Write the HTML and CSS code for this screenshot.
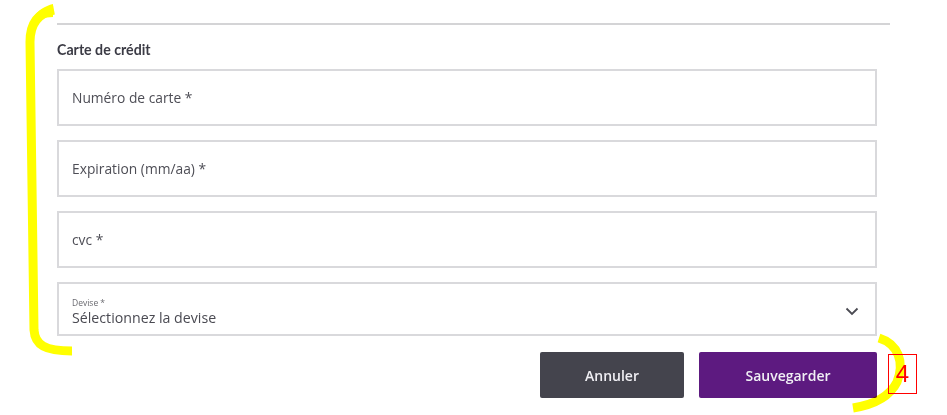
FILE: index.html
```html
<!DOCTYPE html>
<html lang="fr">
<head>
<meta charset="utf-8">
<title>Carte de crédit</title>
<link rel="stylesheet" href="styles.css">
</head>
<body>
<div class="page">
  <div class="divider"></div>
  <h2 class="title">Carte de crédit</h2>
  <div class="fields">
    <div class="field">Numéro de carte *</div>
    <div class="field">Expiration (mm/aa) *</div>
    <div class="field">cvc *</div>
    <div class="field select">
      <div class="select-text">
        <span class="select-label">Devise *</span>
        <span class="select-value">Sélectionnez la devise</span>
      </div>
      <svg class="chevron" width="14" height="9" viewBox="0 0 14 9"><path d="M1.5 1.5 L7 7 L12.5 1.5" fill="none" stroke="#4a4a52" stroke-width="1.8"/></svg>
    </div>
  </div>
  <div class="actions">
    <button class="btn btn-cancel">Annuler</button>
    <button class="btn btn-save">Sauvegarder</button>
  </div>
</div>
<svg class="annot" width="947" height="415" viewBox="0 0 947 415">
  <path class="hl" d="M54 10 C38 13 30 24 30 42 L34 330 C35 345 45 351 72 351"/>
  <path class="hl-top" d="M53 4 L53 17 C44 17 38 20 33 26 L33 18 C38 10 45 6 53 4 Z"/>
  <path class="hl" d="M879 338 C898 344 905 362 897 382 C889 398 872 405 853 408"/>
</svg>
<div class="badge">4</div>
</body>
</html>
```
FILE: styles.css
```css
html, body {
  margin: 0;
  padding: 0;
  background: #ffffff;
}
body {
  width: 947px;
  height: 415px;
  overflow: hidden;
  position: relative;
  font-family: "Open Sans", "Noto Sans", sans-serif;
}
.page {
  padding-left: 57px;
  width: 833px;
}
.divider {
  margin-top: 23px;
  height: 2px;
  background: #d4d4d6;
}
.title {
  margin: 16px 0 10px;
  font-family: "Lato", sans-serif;
  font-weight: 700;
  font-size: 14.2px;
  line-height: 18px;
  color: #3b3b45;
}
.fields {
  width: 820px;
  display: flex;
  flex-direction: column;
  gap: 14px;
}
.field {
  box-sizing: border-box;
  height: 57px;
  border: 2px solid #d9d9dc;
  display: flex;
  align-items: center;
  padding-left: 13px;
  font-size: 13.8px;
  font-weight: 500;
  color: #4e4e56;
}
.field.select {
  height: 54px;
  justify-content: space-between;
  padding-right: 16px;
}
.select-text {
  display: flex;
  flex-direction: column;
  padding-top: 7px;
}
.select-label {
  font-size: 8.5px;
  line-height: 11px;
  font-weight: 400;
  color: #6a6a70;
}
.select-value {
  font-size: 14.2px;
  line-height: 20px;
  color: #4a4a52;
  font-weight: 500;
}
.chevron {
  margin-top: 4px;
}
.actions {
  width: 820px;
  margin-top: 16px;
  display: flex;
  justify-content: flex-end;
  gap: 15px;
}
.btn {
  height: 46px;
  border: none;
  border-radius: 2px;
  font-family: "Open Sans", "Noto Sans", sans-serif;
  font-weight: 600;
  font-size: 14px;
  color: #f0eff4;
  padding: 0;
}
.btn-cancel {
  width: 144px;
  background: #44444d;
}
.btn-save {
  width: 178px;
  background: #5d1a80;
}
.annot {
  position: absolute;
  left: 0;
  top: 0;
  mix-blend-mode: multiply;
  pointer-events: none;
}
.hl {
  fill: none;
  stroke: #ffff00;
  stroke-width: 9;
  stroke-linecap: butt;
}
.hl-top {
  fill: #ffff00;
  stroke: none;
}
.badge {
  position: absolute;
  left: 888px;
  top: 354px;
  width: 29px;
  height: 40px;
  box-sizing: border-box;
  border: 1px solid #ff0000;
  color: #ff0000;
  font-family: "Liberation Sans", sans-serif;
  font-size: 24px;
  line-height: 38px;
  text-align: center;
}
```
